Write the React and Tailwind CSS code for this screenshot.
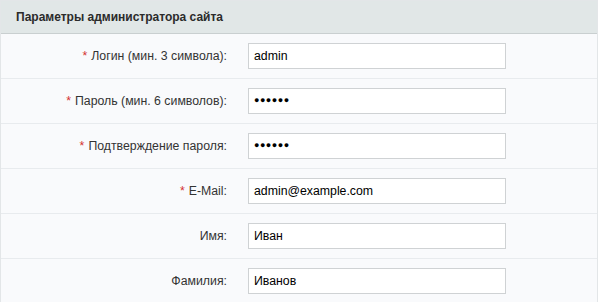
import React from "react";

// Admin settings form block
export default function App() {
  const rows = [
    { label: "Логин (мин. 3 символа):", value: "admin", required: true },
    { label: "Пароль (мин. 6 символов):", value: "●●●●●●", required: true, pass: true },
    { label: "Подтверждение пароля:", value: "●●●●●●", required: true, pass: true },
    { label: "E-Mail:", value: "admin@example.com", required: true },
    { label: "Имя:", value: "Иван" },
    { label: "Фамилия:", value: "Иванов" },
  ];

  return (
    <div
      className="w-[600px] h-[302px] bg-white overflow-hidden"
      style={{ fontFamily: '"Liberation Sans", Arial, sans-serif' }}
    >
      <div className="w-[598px] border border-[#e3e6e8] bg-[#f9fafc]">
        <div className="h-[33px] bg-[#e1e7e7] border-b border-[#c9cfd0] flex items-center px-[15px] text-[12px] font-bold text-[#2b2b2b]">
          Параметры администратора сайта
        </div>

        {rows.map((r, i) => (
          <div
            key={i}
            className="h-[45px] flex items-center border-b border-[#e8ebee]"
          >
            <div className="w-[226px] text-right text-[12.3px] text-[#333]">
              {r.required && <span className="text-[#d43030] mr-[4px]">*</span>}
              {r.label}
            </div>
            <div className="ml-[21px] w-[258px] h-[26px] bg-white border border-[#cfd2d4] flex items-center px-[5px] text-black">
              {r.pass ? (
                <span className="text-[9px] tracking-[0.5px]">{r.value}</span>
              ) : (
                <span className="text-[12.3px]">{r.value}</span>
              )}
            </div>
          </div>
        ))}
      </div>
    </div>
  );
}
